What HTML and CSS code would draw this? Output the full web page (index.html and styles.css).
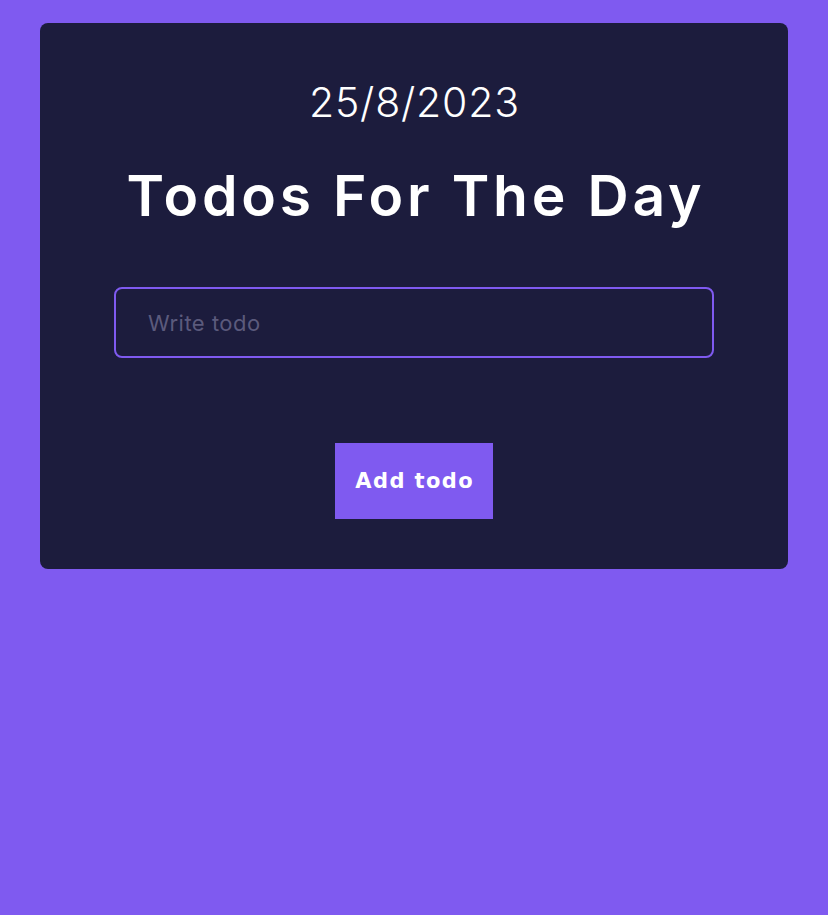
FILE: index.html
```html
<!DOCTYPE html>
<html lang="en">
<head>
<meta charset="utf-8">
<title>Todos</title>
<link rel="stylesheet" href="styles.css">
</head>
<body>
<main class="card">
  <p class="date">25/8/2023</p>
  <h1 class="title">Todos For The Day</h1>
  <form class="todo-form" onsubmit="return false">
    <input class="todo-input" type="text" placeholder="Write todo">
    <button class="add-btn" type="submit">Add todo</button>
  </form>
</main>
</body>
</html>
```
FILE: styles.css
```css
* { box-sizing: border-box; }
html, body { margin: 0; padding: 0; }
body {
  background: #7f5af0;
  min-height: 915px;
  padding: 23px 40px;
  font-family: "Inter", "Noto Sans", sans-serif;
}
.card {
  background: #1c1c3d;
  border-radius: 8px;
  padding: 49px 0 50px;
  display: flex;
  flex-direction: column;
  align-items: center;
  color: #ffffff;
}
.date {
  margin: 0;
  height: 60px;
  line-height: 60px;
  font-size: 41px;
  font-weight: 300;
  letter-spacing: 0.8px;
  padding-left: 0.8px;
}
.title {
  margin: 29px 0 0;
  height: 70px;
  line-height: 70px;
  font-size: 57px;
  font-weight: 600;
  letter-spacing: 3.8px;
  padding-left: 3.8px;
}
.todo-form {
  margin-top: 56px;
  display: flex;
  flex-direction: column;
  align-items: center;
}
.todo-input {
  width: 600px;
  height: 71px;
  background: transparent;
  border: 2px solid #7f5af0;
  border-radius: 8px;
  padding: 0 32px;
  font-family: inherit;
  font-size: 22px;
  letter-spacing: 0.5px;
  color: #ffffff;
  outline: none;
}
.todo-input::placeholder { color: #5b5a7c; }
.add-btn {
  margin-top: 85px;
  width: 158px;
  height: 76px;
  background: #7f5af0;
  border: none;
  color: #ffffff;
  font-family: "DejaVu Sans", sans-serif;
  font-weight: 700;
  font-size: 21px;
  letter-spacing: 1.4px;
  padding: 0 0 0 1.4px;
  cursor: pointer;
}
```
